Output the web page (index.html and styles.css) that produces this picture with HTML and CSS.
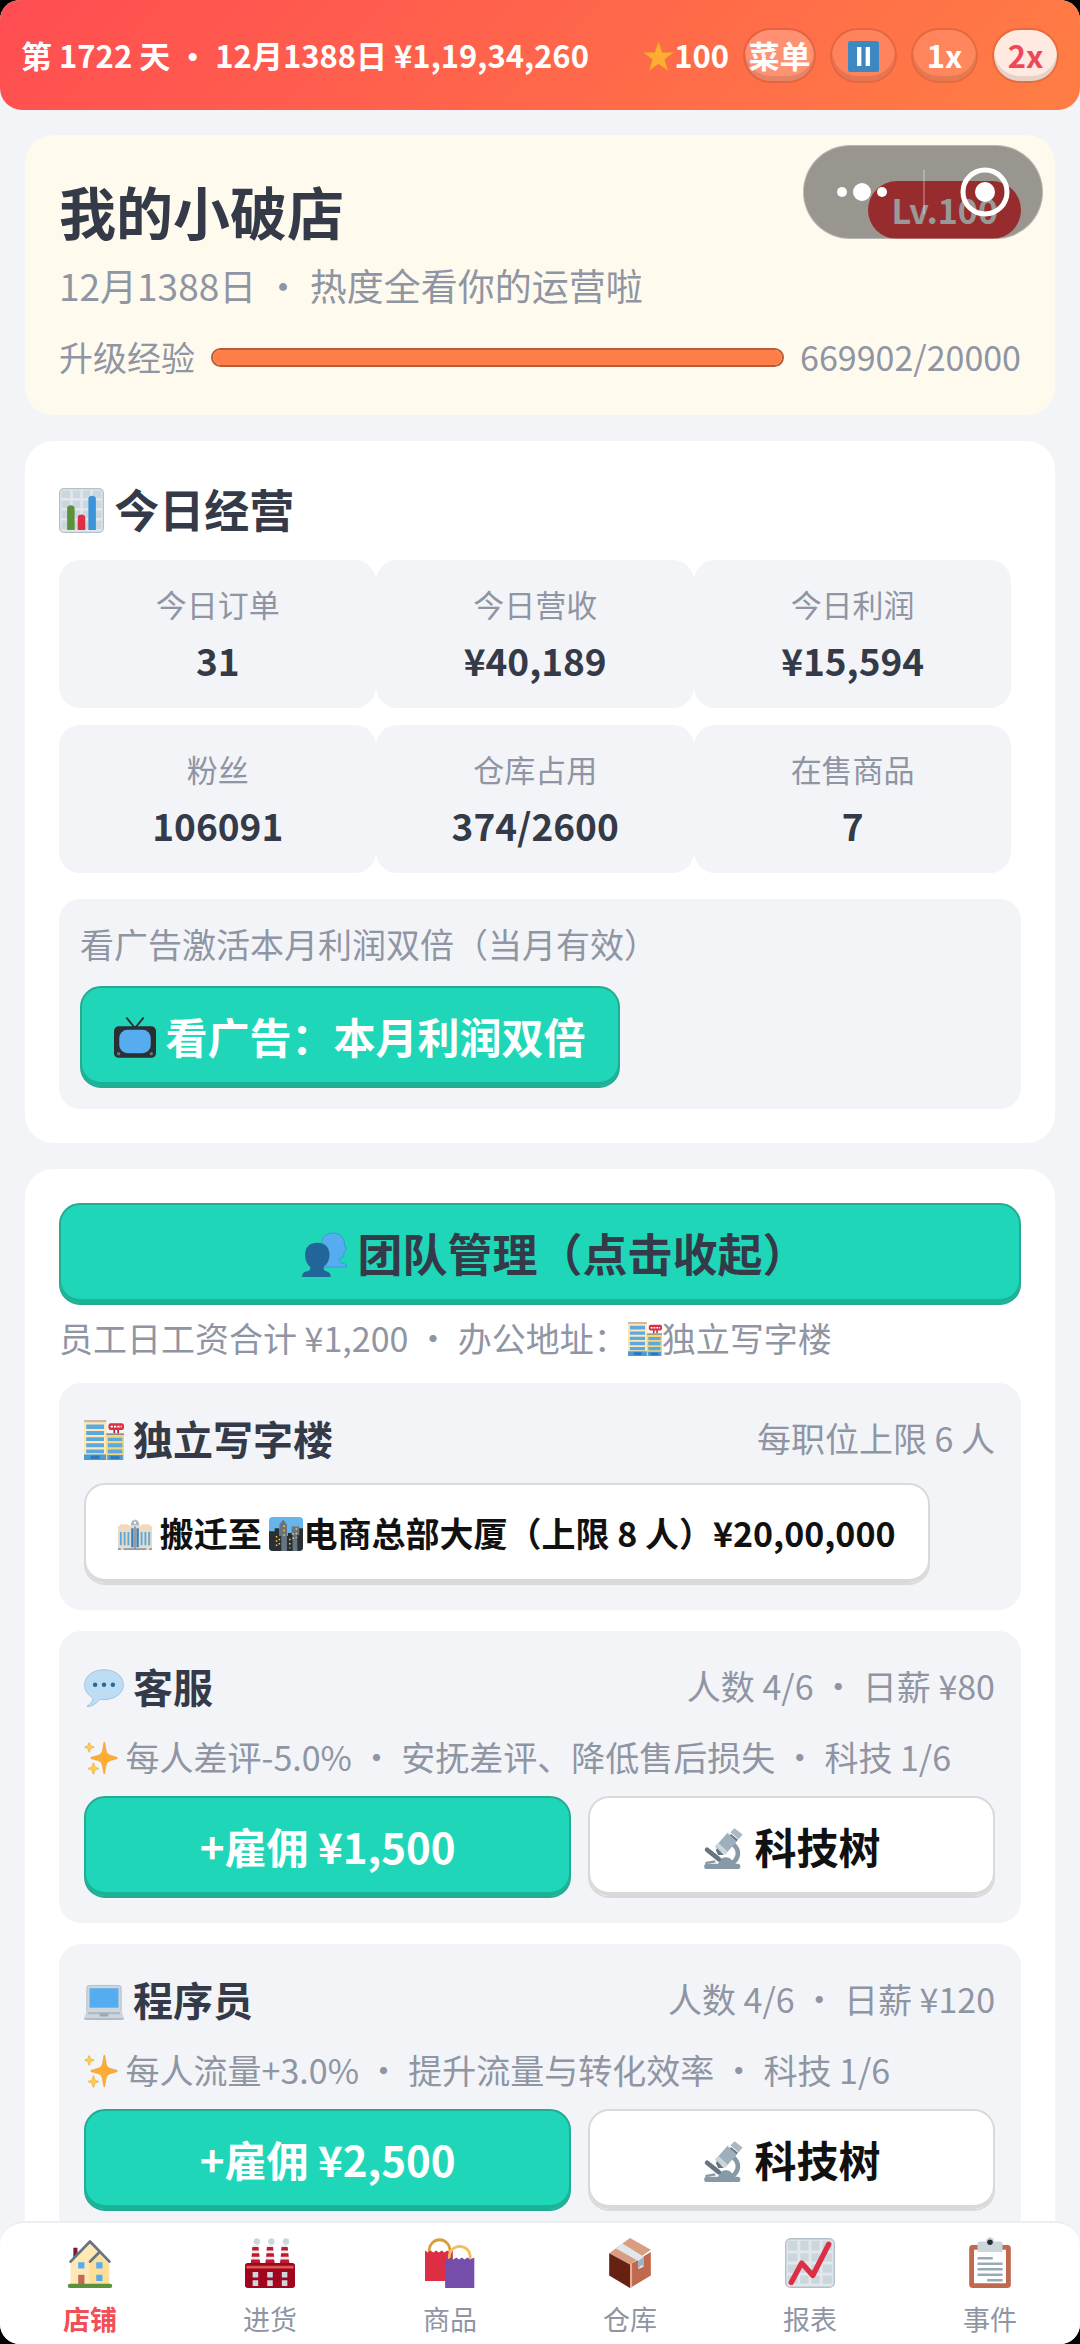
FILE: index.html
```html
<!DOCTYPE html>
<html lang="zh-CN">
<head>
  <meta charset="utf-8">
  <meta name="viewport" content="width=device-width, initial-scale=1">
  <title>我的小破店</title>
  <link rel="stylesheet" href="styles.css">
</head>
<body>

<svg class="sprite" aria-hidden="true">
  <symbol id="i-star" viewBox="0 0 36 36">
    <path fill="#FFAC33" stroke="#d98a2b" stroke-width=".6" d="M18 0l4.400 13.200H36L25.200 21.400 29.400 35 18 26.800 6.600 35l4.200-13.600L0 13.200h13.600z"/>
  </symbol>
  <symbol id="i-pause" viewBox="0 0 36 36">
    <rect width="36" height="36" rx="3" fill="#3B88C3"/>
    <rect x="10.500" y="7" width="5" height="22" fill="#fff"/>
    <rect x="20.500" y="7" width="5" height="22" fill="#fff"/>
  </symbol>
  <symbol id="i-chart" viewBox="0 0 36 36">
    <rect x=".5" y=".5" width="35" height="35" rx="3.500" fill="#E1E8ED" stroke="#b4c0c8"/>
    <path fill="#CCD6DD" d="M2 2h7v6H2zM11 2h6v6h-6zM19 2h6v6h-6zM27 2h7v6h-7zM2 10h7v6H2zM11 10h6v6h-6zM19 10h6v6h-6zM27 10h7v6h-7zM2 18h7v6H2zM11 18h6v6h-6zM19 18h6v6h-6zM27 18h7v6h-7zM2 26h7v7H2zM11 26h6v7h-6zM19 26h6v7h-6zM27 26h7v7h-7z"/>
    <path fill="#5C913B" d="M6.500 33.500V16c0-3 6-3 6 0v17.500z"/>
    <path fill="#DD2E44" d="M15 33.500V23.500c0-3 6-3 6 0v10z"/>
    <path fill="#3B94D9" d="M23.500 33.500V8.500c0-3 6-3 6 0v25z"/>
  </symbol>
  <symbol id="i-tv" viewBox="0 0 36 36">
    <path d="M11 1l7 8.500L25 1" fill="none" stroke="#292F33" stroke-width="1.600" stroke-linecap="round"/>
    <rect y="8" width="36" height="27" rx="4" fill="#292F33"/>
    <rect x="4.500" y="11" width="27" height="20" rx="7" fill="#55ACEE"/>
    <circle cx="4" cy="31.500" r="1.500" fill="#66757F"/>
    <circle cx="32" cy="31.500" r="1.500" fill="#66757F"/>
  </symbol>
  <symbol id="i-team" viewBox="0 0 36 36">
    <path fill="#55ACEE" stroke="#3a8fd0" stroke-width=".6" d="M15.500 9C16 3.500 20 .8 25 .8c6 0 9 4 9 9 0 1.500 1.500 3 1.500 4 0 .8-1.500.8-1.700 1.800-.3 3 0 4.800-3 5.200-1.300.2-1 3.200.2 3.700 2.500.8 5 .8 5 4V28H17z"/>
    <path fill="#226699" d="M2.500 18C2.500 11.500 6.500 8.500 12.300 8.500S22 11.800 22 18c0 4.500-1.800 7.600-4.200 9.400-.9.600-.7 3.100.6 3.500 3 1 4.600 1.500 4.600 5.100H0c0-3.600 2-4.200 5.400-5.100 1.500-.4 1.700-2.900.6-3.600C4 25.800 2.500 22.500 2.500 18z"/>
  </symbol>
  <symbol id="i-office" viewBox="0 0 36 36">
    <path fill="#FFE8B6" d="M0 1h20v34H0z"/>
    <path fill="#CBB7A5" d="M0 0h20v2H0z"/>
    <path fill="#5CA9E0" d="M2 4h16v4H2zM2 10h16v3.500H2zM2 15.500h16V19H2zM2 21h16v3.500H2zM2 26.500h16V30H2z"/>
    <path fill="#4A9BD8" d="M0 31h20v5H0z"/>
    <path fill="#2A78B8" d="M6 32h8v3H6z"/>
    <path fill="#F4D57A" d="M20 13h16v23H20z"/>
    <path fill="#8d8b82" d="M20 12h16v1.500H20z"/>
    <path fill="#5CA9E0" d="M21.500 16h13v3h-13zM21.500 21h13v3.500h-13zM21.500 26.500h13V30h-13z"/>
    <path fill="#4A9BD8" d="M21 31.500h14V36H21z"/>
    <path fill="#2A78B8" d="M24 32.500h8V35h-8z"/>
    <path fill="#9c2a3c" d="M26.500 8H28v4h-1.500zM30 8h1.500v4H30z"/>
    <rect x="22" y="3" width="14" height="6" rx="2" fill="#DD2E44"/>
    <path d="M24 6h10" stroke="#fff" stroke-width="1.600" stroke-dasharray="2 1"/>
  </symbol>
  <symbol id="i-hall" viewBox="0 0 36 36">
    <path fill="#a8b6c0" d="M13.500 9c0-3.500 2-6 4.500-6s4.500 2.500 4.500 6z"/>
    <path fill="#E8DCC8" d="M0 10.500 3 8h7l3 1.500h10L26 8h7l3 2.500V35H0z"/>
    <path fill="#F3D9BB" d="M0 14v-3.500L3 8h7l3 2.500V14zM23 14v-3.500L26 8h7l3 2.500V14z"/>
    <path fill="#5CA9E0" d="M2 16h2v14H2zM6 16h2v14H6zM10 16h2v14h-2zM24 16h2v14h-2zM28 16h2v14h-2zM32 16h2v14h-2z"/>
    <path fill="#3B7FB5" d="M14 12h2.500v20H14zM19.500 12H22v20h-2.500z"/>
    <path fill="#8d9aa5" d="M17 10h2v24h-2zM0 33h3v2H0zM33 33h3v2h-3zM6 33h24v2H6z"/>
    <circle cx="18" cy="6" r="1.300" fill="#fff"/>
  </symbol>
  <symbol id="i-city" viewBox="0 0 36 36">
    <rect width="36" height="36" rx="4" fill="#69B4EA"/>
    <path fill="#292F33" d="M0 15h6v-3h5v8h9v-3h9v-5h7v20a4 4 0 0 1-4 4H4a4 4 0 0 1-4-4z"/>
    <path fill="#66757F" d="M11 8l4-5 4 5v28h-6V20h-2zM24 10h8v9h-2v17h-5V19h-1z"/>
    <path stroke="#FFCC4D" stroke-width="1.600" stroke-dasharray="1.600 3" d="M16 9v12M8 20v12M11 23v9M29 12v10M25.500 17v8M22 23v10"/>
  </symbol>
  <symbol id="i-chat" viewBox="0 0 36 36">
    <path fill="#BDDDF4" stroke="#8fb4cf" stroke-width=".6" d="M18 1.500C8 1.500.5 7.500.5 15c0 5 3 9.500 7.500 11.700.2 3-2 5.300-5 7.300-.5.600 0 1 .6.900 5-.8 8-3.600 10.800-6.600 1 .2 2.400.2 3.600.2 10 0 17.500-6 17.500-13.500S28 1.500 18 1.500z"/>
    <circle cx="10" cy="15" r="2" fill="#2A6797"/>
    <circle cx="18" cy="15" r="2" fill="#2A6797"/>
    <circle cx="26" cy="15" r="2" fill="#2A6797"/>
  </symbol>
  <symbol id="i-spark" viewBox="0 0 36 36">
    <path fill="#FFAC33" stroke="#e0922a" stroke-width=".5" d="M21.500 1c1 0 1.300 10 3.500 12.500S35.500 16.500 35.500 18s-8 2-10.500 4.500S22.500 35 21.500 35 20 25 18 22.500 7 19.500 7 18s8.500-2 11-4.500S20.500 1 21.500 1z"/>
    <path fill="#FFCC4D" stroke="#d9a53a" stroke-width=".6" d="M5.500 1.500c.8 0 1 3 1.500 3.500s3.800.8 3.800 1.500-3.300.8-3.800 1.500-.7 4-1.500 4-1-3.300-1.500-4S.7 7.200.7 6.500 3.500 5.500 4 5s.7-3.500 1.500-3.500zM10 23c.8 0 1.200 4 1.800 4.700s4 .6 4 1.500-3.400.8-4 1.500S10.800 35.300 10 35.300s-1.200-3.900-1.800-4.600-4-.6-4-1.500 3.400-.8 4-1.500S9.200 23 10 23z"/>
  </symbol>
  <symbol id="i-laptop" viewBox="0 0 36 36">
    <path fill="#CCD6DD" stroke="#a3afb8" stroke-width=".6" d="M4.500 4h27a2 2 0 0 1 2 2v22h-31V6a2 2 0 0 1 2-2z"/>
    <path fill="#55ACEE" d="M5 6.500h26V24H5z"/>
    <path fill="#CCD6DD" d="M2.500 27h31l2.500 6H0z"/>
    <path fill="#B0BCC5" d="M4 28h28l.8 2H3.200zM0 33h36c0 1.500-.6 2-1.500 2h-33C.6 35 0 34.500 0 33z"/>
    <path fill="#99AAB5" d="M14.500 29h7l.6 3h-8.200z"/>
  </symbol>
  <symbol id="i-scope" viewBox="0 0 36 36">
    <path d="M26 15c6 5 5 12-2 17" fill="none" stroke="#8899A6" stroke-width="4"/>
    <path fill="#8899A6" d="M13 32c1-5 4-6 7-6s6 3 7 6zM2 30l8-1.500 1 2L2 32z"/>
    <rect x="1" y="31.500" width="31" height="4.500" rx="2.200" fill="#8899A6"/>
    <path d="M3.500 19.500l10 8" stroke="#66757F" stroke-width="4" stroke-linecap="round"/>
    <path fill="#66757F" d="M24 6l6 5-3 3-6-5zM11 20l2 4 5 0-6-6z"/>
    <path fill="#9FB0BC" d="M21 5l8 7.500L19 23.500l-8.500-6.500z"/>
    <path fill="#CCD6DD" d="M13 13.500l8 7.500-2 2.500-8.500-7.500z"/>
    <path fill="#AAB8C2" d="M27 1l7 5.500-3.500 4-7-6z"/>
  </symbol>
  <symbol id="i-home" viewBox="0 0 36 36">
    <path fill="#77212f" d="M6 7h3v9H6z"/>
    <path fill="#FFE8B6" d="M4 17 18 4l12 12 2 1v17H4z"/>
    <path fill="#FFD983" d="M17.500 17l6-6 8 8v15h-14z" opacity=".6"/>
    <path fill="none" stroke="#66757F" stroke-width="2" stroke-linecap="round" stroke-linejoin="round" d="M4 17 18 2.500 32 17M18 17l6-6"/>
    <path fill="#55ACEE" d="M9.500 17.500H14V22H9.500zM22.500 17.500H27V22h-4.500zM22.500 26.500H27V31h-4.500z"/>
    <path fill="#C1694F" d="M9.500 26.500H14V34H9.500z"/>
    <rect x="2" y="33" width="32" height="3" rx="1.500" fill="#5C913B"/>
  </symbol>
  <symbol id="i-factory" viewBox="0 0 36 36">
    <path fill="#F5E8EA" d="M5.500 5h4l1.300 14H4.200zM16 5h4l1.300 14h-6.600zM26.500 5h4l1.300 14h-6.600z"/>
    <path fill="#BE1931" d="M5.300 6.500h4.400L10 9H5zM5 11h5.200l.3 2.500H4.700zM4.500 15.500h6L11 18H4.200zM15.800 6.500h4.400l.3 2.500h-5zM15.500 11h5.200l.3 2.500h-5.800zM15 15.500h6l.4 2.500h-6.700zM26.300 6.500h4.400L31 9h-5zM26 11h5.200l.3 2.500h-5.800zM25.500 15.500h6L32 18h-6.800z"/>
    <circle cx="8.500" cy="2.500" r="2.300" fill="#CCD6DD"/>
    <circle cx="19" cy="2.500" r="2.300" fill="#CCD6DD"/>
    <circle cx="29.500" cy="2.500" r="2.300" fill="#CCD6DD"/>
    <rect y="18" width="36" height="18" rx="2" fill="#A0041E"/>
    <path fill="#DD5A50" d="M1 20h34v2H1z"/>
    <path fill="#CCD6DD" d="M5.500 24.500h4v4h-4zM16 24.500h4v4h-4zM26.500 24.500h4v4h-4zM5.500 30.500h4v4h-4zM16 30.500h4v4h-4zM26.500 30.500h4v4h-4z"/>
  </symbol>
  <symbol id="i-bags" viewBox="0 0 36 36">
    <path fill="none" stroke="#D99E3C" stroke-width="2" d="M3 11c-1-13 16-13 15 0"/>
    <path fill="#DD2E44" d="M0 9l2 1.500L4 9l2 1.500L8 9l2 1.500L12 9l2 1.500L16 9l2 1.500L20 9v22H0z"/>
    <path fill="none" stroke="#F4BE5A" stroke-width="2" d="M17.500 15c-1-12 16-12 15 0"/>
    <path fill="#744EAA" d="M14.500 14l2 1.500 2-1.500 2 1.500 2-1.500 2 1.500 2-1.500 2 1.500 2-1.500 2 1.500 3-1.500v22h-21z"/>
  </symbol>
  <symbol id="i-box" viewBox="0 0 36 36">
    <path fill="#D99E82" d="M18 0 33 8.500 18 19 3 11z"/>
    <path fill="#662113" d="M3 11l15 8v17L3 27z"/>
    <path fill="#C1694F" d="M18 19 33 10v17L18 36z"/>
    <path fill="#E8AE93" d="M18 19l1.500-.8v17L18 36z"/>
    <path fill="#E1E8ED" d="M8 7.500 12.500 4 28 13.500v7l-4 2v-6z"/>
    <path fill="#9cb3c2" d="M24 16.500l4-3v7l-2-1-2 3z"/>
  </symbol>
  <symbol id="i-trend" viewBox="0 0 36 36">
    <rect x=".5" y=".5" width="35" height="35" rx="3.500" fill="#E1E8ED" stroke="#b4c0c8"/>
    <path fill="#CCD6DD" d="M2 2h7v7H2zM11 2h6v7h-6zM19 2h6v7h-6zM27 2h7v7h-7zM2 11h7v6H2zM11 11h6v6h-6zM19 11h6v6h-6zM27 11h7v6h-7zM2 19h7v6H2zM11 19h6v6h-6zM19 19h6v6h-6zM27 19h7v6h-7zM2 27h7v6H2zM11 27h6v6h-6zM19 27h6v6h-6zM27 27h7v6h-7z"/>
    <path d="M4.500 32 12 18l8 9L31.500 4.500" fill="none" stroke="#DD2E44" stroke-width="3.800" stroke-linecap="round" stroke-linejoin="round"/>
  </symbol>
  <symbol id="i-clip" viewBox="0 0 36 36">
    <rect x="3" y="5" width="30" height="31" rx="2.500" fill="#C1694F"/>
    <path fill="#fff" d="M6.500 8.500h23v24h-23z"/>
    <path fill="#CCD6DD" d="M9 4a1.500 1.500 0 0 1 1.500-1.500H15a3 3 0 0 1 6 0h4.500A1.500 1.500 0 0 1 27 4v6H9z"/>
    <circle cx="18" cy="3" r="2" fill="#292F33"/>
    <path stroke="#99AAB5" stroke-width="1.800" d="M9 14.500h11M9 18.500h18M9 22.500h18M9 26.500h18M16 30.500h11"/>
  </symbol>
</svg>

<div class="app">
  <header class="topbar">
    <div class="topbar-info">第 1722 天 ・ 12月1388日 ¥1,19,34,260</div>
    <div class="topbar-tools">
      <span class="stars"><svg class="emoji"><use href="#i-star"/></svg>100</span>
      <button class="pill menu" type="button">菜单</button>
      <button class="pill" type="button" aria-label="暂停"><svg class="emoji"><use href="#i-pause"/></svg></button>
      <button class="pill" type="button">1x</button>
      <button class="pill active" type="button">2x</button>
    </div>
  </header>

  <main class="content">
    <section class="card shop">
      <div class="row">
        <h1>我的小破店</h1>
        <span class="level">Lv.100</span>
      </div>
      <p class="shop-sub">12月1388日 ・ 热度全看你的运营啦</p>
      <div class="exp muted">
        <label for="exp">升级经验</label>
        <progress id="exp" value="20000" max="20000"></progress>
        <span>669902/20000</span>
      </div>
    </section>

    <section class="card">
      <h2><svg class="emoji"><use href="#i-chart"/></svg> 今日经营</h2>
      <div class="stats">
        <div class="stat"><span>今日订单</span><b>31</b></div>
        <div class="stat"><span>今日营收</span><b>¥40,189</b></div>
        <div class="stat"><span>今日利润</span><b>¥15,594</b></div>
        <div class="stat"><span>粉丝</span><b>106091</b></div>
        <div class="stat"><span>仓库占用</span><b>374/2600</b></div>
        <div class="stat"><span>在售商品</span><b>7</b></div>
      </div>
      <div class="ad">
        <p class="muted">看广告激活本月利润双倍（当月有效）</p>
        <button class="btn primary" type="button"><svg class="emoji"><use href="#i-tv"/></svg> 看广告：本月利润双倍</button>
      </div>
    </section>

    <section class="card">
      <button class="btn primary toggle" type="button" aria-expanded="true"><svg class="emoji"><use href="#i-team"/></svg> 团队管理（点击收起）</button>
      <p class="muted summary">员工日工资合计 ¥1,200 ・ 办公地址：<svg class="emoji"><use href="#i-office"/></svg>独立写字楼</p>

      <div class="panel">
        <div class="row">
          <h3><svg class="emoji"><use href="#i-office"/></svg> 独立写字楼</h3>
          <span class="muted">每职位上限 6 人</span>
        </div>
        <div class="actions">
          <button class="btn plain small" type="button"><svg class="emoji"><use href="#i-hall"/></svg> 搬迁至 <svg class="emoji"><use href="#i-city"/></svg>电商总部大厦（上限 8 人）¥20,00,000</button>
        </div>
      </div>

      <div class="panel">
        <div class="row">
          <h3><svg class="emoji"><use href="#i-chat"/></svg> 客服</h3>
          <span class="muted">人数 4/6 ・ 日薪 ¥80</span>
        </div>
        <p class="muted desc"><svg class="emoji"><use href="#i-spark"/></svg> 每人差评-5.0% ・ 安抚差评、降低售后损失 ・ 科技 1/6</p>
        <div class="actions">
          <button class="btn primary hire" type="button">+雇佣 ¥1,500</button>
          <button class="btn plain tech" type="button"><svg class="emoji"><use href="#i-scope"/></svg> 科技树</button>
        </div>
      </div>

      <div class="panel">
        <div class="row">
          <h3><svg class="emoji"><use href="#i-laptop"/></svg> 程序员</h3>
          <span class="muted">人数 4/6 ・ 日薪 ¥120</span>
        </div>
        <p class="muted desc"><svg class="emoji"><use href="#i-spark"/></svg> 每人流量+3.0% ・ 提升流量与转化效率 ・ 科技 1/6</p>
        <div class="actions">
          <button class="btn primary hire" type="button">+雇佣 ¥2,500</button>
          <button class="btn plain tech" type="button"><svg class="emoji"><use href="#i-scope"/></svg> 科技树</button>
        </div>
      </div>
    </section>
  </main>

  <nav class="tabbar">
    <a class="tab active" href="#shop"><svg class="emoji"><use href="#i-home"/></svg>店铺</a>
    <a class="tab" href="#stock"><svg class="emoji"><use href="#i-factory"/></svg>进货</a>
    <a class="tab" href="#goods"><svg class="emoji"><use href="#i-bags"/></svg>商品</a>
    <a class="tab" href="#depot"><svg class="emoji"><use href="#i-box"/></svg>仓库</a>
    <a class="tab" href="#report"><svg class="emoji"><use href="#i-trend"/></svg>报表</a>
    <a class="tab" href="#events"><svg class="emoji"><use href="#i-clip"/></svg>事件</a>
  </nav>

  <!-- floating host controls: more / close -->
  <div class="capsule">
    <button type="button" aria-label="更多"><svg width="52" height="20" viewBox="0 0 52 20"><g fill="#fff"><circle cx="6" cy="10" r="5"/><circle cx="26" cy="10" r="9"/><circle cx="46" cy="10" r="5"/></g></svg></button>
    <i></i>
    <button type="button" aria-label="关闭"><svg width="50" height="50" viewBox="0 0 50 50"><circle cx="25" cy="25" r="22" fill="none" stroke="#fff" stroke-width="5"/><circle cx="25" cy="25" r="10" fill="#fff"/></svg></button>
  </div>
</div>

</body>
</html>
```
FILE: styles.css
```css
* { box-sizing: border-box; }
html { background: #000; }
body {
  margin: 0;
  color: #343a48;
  font: 34px/48px "Noto Sans CJK SC", "Noto Sans", sans-serif;
}
h1, h2, h3, p { margin: 0; }
button { font-family: inherit; margin: 0; }

.sprite { position: absolute; width: 0; height: 0; }
.emoji {
  width: 1em;
  height: 1em;
  vertical-align: -0.12em;
}

.app {
  position: relative;
  display: flex;
  flex-direction: column;
  height: 100vh;
  background: #f2f4f8;
  border-radius: 20px;
  overflow: hidden;
}

/* top bar */
.topbar {
  flex: none;
  display: flex;
  align-items: center;
  justify-content: space-between;
  height: 110px;
  padding: 0 21px;
  background: linear-gradient(135deg, #ff4d52, #ff7e44);
  border-radius: 0 0 22px 22px;
  color: #fff;
  font-size: 31px;
  font-weight: bold;
  white-space: nowrap;
}
.topbar-tools {
  display: flex;
  align-items: center;
  gap: 14px;
}
.pill {
  width: 67px;
  height: 55px;
  padding: 0;
  border: 2px solid rgba(0,0,0,.1);
  border-radius: 28px;
  background: rgba(255,255,255,.12);
  background-clip: padding-box;
  box-shadow: inset 0 -5px rgba(0,0,0,.1);
  color: #fff;
  font-size: 31px;
  font-weight: bold;
  line-height: 48px;
}
.pill.menu { width: 73px; background-color: rgba(255,255,255,.24); }
.pill.active { background-color: rgba(255,255,255,.84); color: #f0465a; }

/* scrolling area */
.content {
  flex: 1;
  min-height: 0;
  padding: 25px 25px 0;
  overflow-y: auto;
  scrollbar-width: none;
}
.card {
  margin-bottom: 26px;
  padding: 34px;
  background: #fff;
  border-radius: 28px;
}
.row {
  display: flex;
  align-items: center;
  justify-content: space-between;
}
.muted { color: #8f95a3; }

.shop { background: #fffaee; }
h1 { font-size: 57px; line-height: 82px; }
.level {
  padding: 5px 23px;
  border-radius: 29px;
  background: #fa4a4d;
  color: #fff;
  font-weight: bold;
}
.shop-sub {
  margin-top: 7px;
  color: #8f95a3;
  font-size: 37px;
  line-height: 54px;
}
.exp {
  display: flex;
  align-items: center;
  gap: 16px;
  margin-top: 21px;
}
.exp progress {
  flex: 1;
  min-width: 0;
  height: 19px;
  border: 2px solid #b75c38;
  border-radius: 10px;
  background: #ff7d46;
  overflow: hidden;
  appearance: none;
}
.exp progress::-webkit-progress-bar { background: #eceff4; }
.exp progress::-webkit-progress-value { background: #ff7d46; }

h2 { font-size: 45px; line-height: 68px; }
.stats {
  display: flex;
  flex-wrap: wrap;
  row-gap: 17px;
  margin-top: 17px;
}
.stat {
  width: 33%;
  padding: 21px 0;
  background: #f2f4f8;
  border-radius: 21px;
  text-align: center;
}
.stat span {
  display: block;
  margin-bottom: 6px;
  color: #8f95a3;
  font-size: 31px;
  line-height: 46px;
}
.stat b { display: block; font-size: 37px; line-height: 54px; }
.ad {
  margin-top: 26px;
  padding: 21px;
  background: #f2f4f8;
  border-radius: 21px;
}
.ad .btn { margin-top: 18px; }

/* buttons */
.btn {
  display: block;
  height: 102px;
  padding: 0 32px 3px;
  border: 2px solid;
  border-radius: 21px;
  font-size: 42px;
  font-weight: bold;
  line-height: 60px;
  white-space: nowrap;
}
.primary {
  background: #1fd7b8;
  border-color: #25ab92;
  box-shadow: inset 0 -4px #1bb398;
  color: #fff;
}
.plain {
  background: #fff;
  border-color: #d9d9d9;
  box-shadow: inset 0 -4px #d9d9d9;
  color: #111;
}
.small { font-size: 34px; }
/* the full-width closing bracket leaves blank space on the right */
.toggle {
  width: 100%;
  padding-left: 62px;
  color: #343a48;
  font-size: 45px;
}

.summary { margin-top: 9px; }
.panel {
  margin-top: 21px;
  padding: 25px 26px 25px 25px;
  background: #f2f4f8;
  border-radius: 22px;
}
h3 { font-size: 40px; line-height: 60px; }
.desc { margin-top: 17px; }
.actions {
  display: flex;
  gap: 17px;
  margin-top: 15px;
}
.hire, .tech { padding-left: 0; padding-right: 0; }
.hire { flex: 6; }
.tech { flex: 5; }

/* bottom tabs */
.tabbar {
  flex: none;
  display: flex;
  height: 123px;
  border-top: 2px solid #eceef2;
  border-radius: 24px 24px 0 0;
  background: #fff;
}
.tab {
  flex: 1;
  display: flex;
  flex-direction: column;
  align-items: center;
  padding-top: 14px;
  color: #8f95a3;
  font-size: 27px;
  line-height: 40px;
  text-decoration: none;
}
.tab .emoji { width: 50px; height: 52px; margin-bottom: 10px; }
.tab.active { color: #f04f56; font-weight: bold; }

/* sits over the shop card */
.capsule {
  position: absolute;
  top: 145px;
  right: 37px;
  display: flex;
  align-items: center;
  justify-content: space-between;
  width: 240px;
  height: 94px;
  padding: 0 32px;
  border: 1px solid rgba(255,255,255,.3);
  border-radius: 47px;
  background: rgba(0,0,0,.4);
}
.capsule button {
  display: flex;
  padding: 0;
  border: 0;
  background: none;
}
.capsule i { width: 2px; height: 44px; background: rgba(255,255,255,.25); }
```
